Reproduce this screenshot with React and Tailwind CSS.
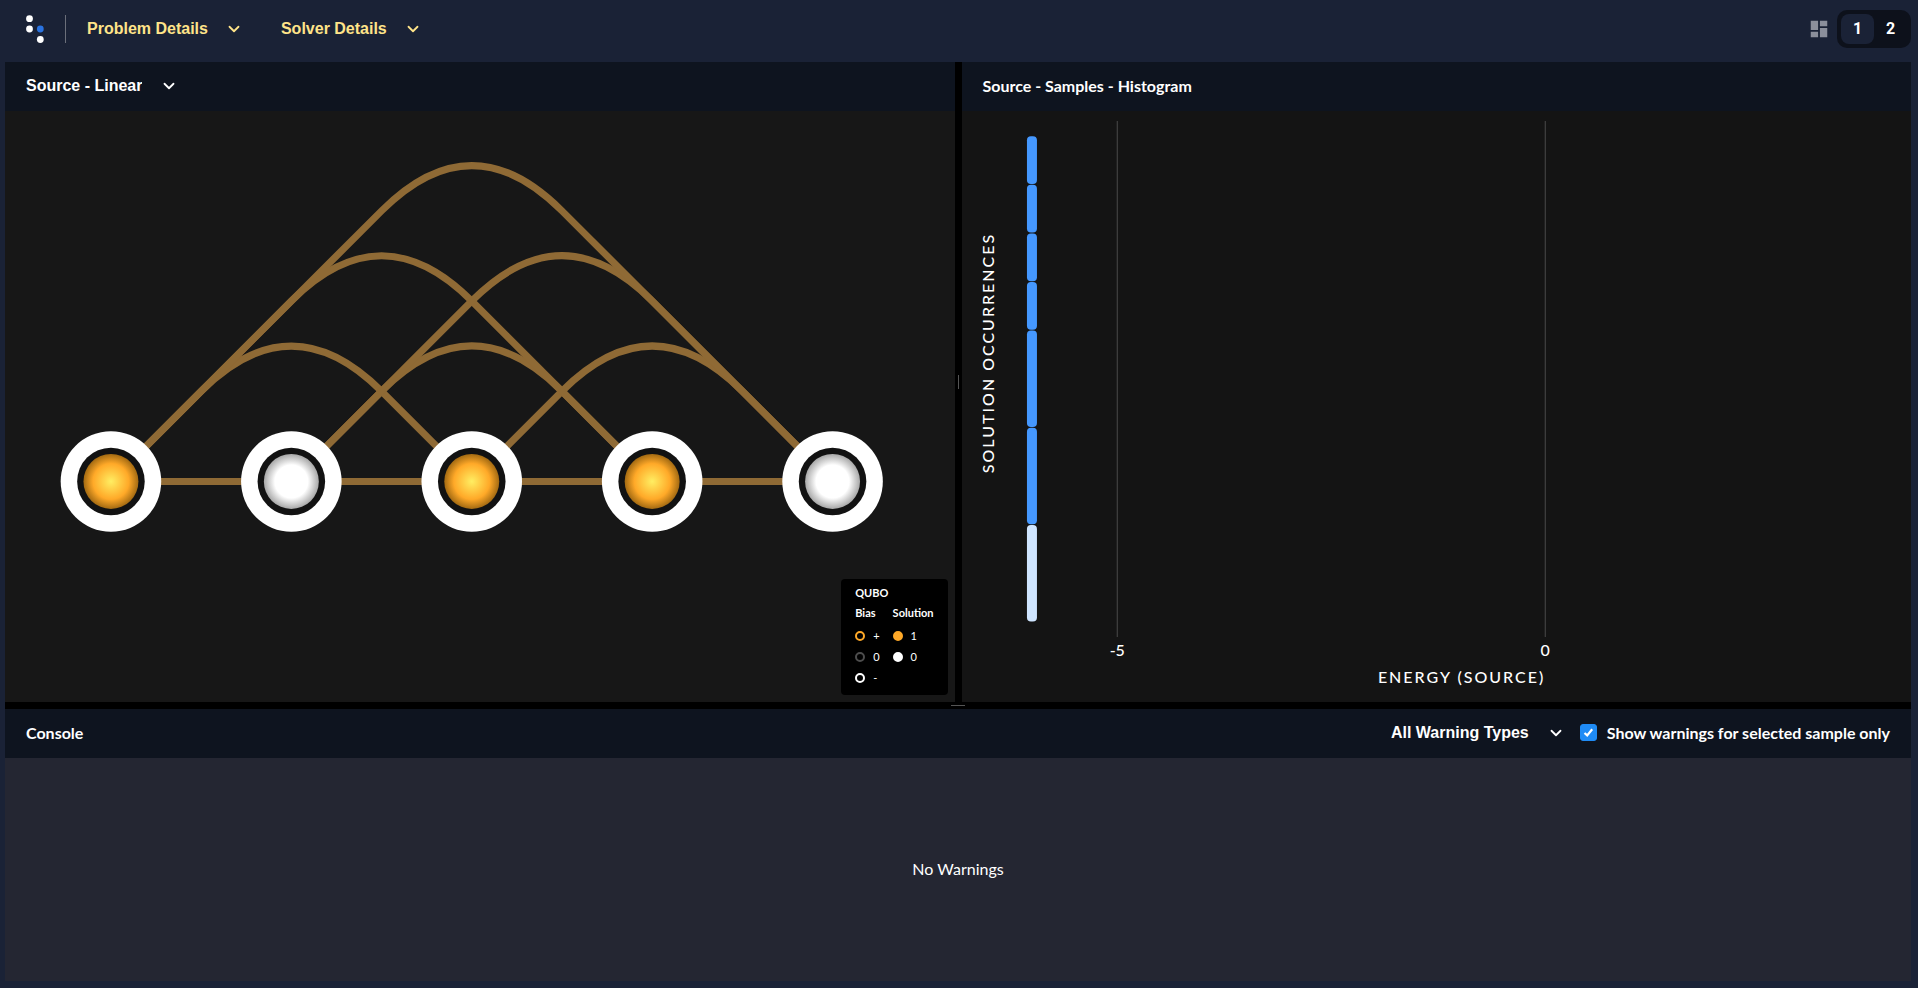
import { ChevronDown } from "lucide-react";
import { MdDashboard } from "react-icons/md";

const NODE_Y = 370.5;
const NODES = [
  { x: 106, fill: "url(#gold)" },
  { x: 286.5, fill: "url(#silver)" },
  { x: 467, fill: "url(#gold)" },
  { x: 647.5, fill: "url(#gold)" },
  { x: 828, fill: "url(#silver)" },
];

const EDGES = [
  [0, 1], [1, 2], [2, 3], [3, 4],
  [0, 2], [1, 3], [2, 4],
  [0, 3], [1, 4],
  [0, 4],
];

// Neighbours are joined by a straight line; the others rise at 45 degrees and round off near the apex.
function edgePath([from, to]) {
  const a = NODES[from].x;
  const b = NODES[to].x;
  if (to - from === 1) return `M${a} ${NODE_Y}H${b}`;
  const mid = (a + b) / 2;
  const apex = NODE_Y - (b - a) / 2;
  return `M${a} ${NODE_Y}L${mid - 90} ${apex + 90}Q${mid} ${apex} ${mid + 90} ${apex + 90}L${b} ${NODE_Y}`;
}

const BARS = [
  { units: 1 }, { units: 1 }, { units: 1 }, { units: 1 },
  { units: 2 }, { units: 2 }, { units: 2, selected: true },
];
const UNIT = 48.6;

function Logo() {
  return (
    <svg width="20" height="30" viewBox="0 0 20 30" aria-label="Home" role="img">
      <circle cx="4.5" cy="4.7" r="3.4" fill="#fff" />
      <circle cx="4.5" cy="15" r="3.4" fill="#fff" />
      <circle cx="15.3" cy="15" r="3.4" fill="#2a73e0" />
      <circle cx="15.3" cy="25.5" r="3.4" fill="#fff" />
    </svg>
  );
}

function MenuButton({ children }) {
  return (
    <button type="button" className="flex items-center gap-[17px] font-bold text-[#ffe489]">
      {children}
      <ChevronDown size={18} strokeWidth={2.4} />
    </button>
  );
}

function SelectBox({ label, value }) {
  return (
    <div className="grid items-center">
      <select
        aria-label={label}
        defaultValue={value}
        className="col-start-1 row-start-1 appearance-none bg-transparent pr-9 font-bold text-white [field-sizing:content]"
      >
        <option>{value}</option>
      </select>
      <ChevronDown
        size={18}
        strokeWidth={2.4}
        className="pointer-events-none col-start-1 row-start-1 justify-self-end text-white"
      />
    </div>
  );
}

function PanelHeader({ children }) {
  return <div className="flex h-[49px] shrink-0 items-center bg-[#0e141f] px-[21px] pb-[2px]">{children}</div>;
}

function Graph() {
  return (
    <svg viewBox="0 0 950 591" className="h-full w-full" role="img" aria-label="Linear graph">
      <defs>
        <radialGradient id="gold">
          <stop offset="0" stopColor="#ffee62" />
          <stop offset="0.65" stopColor="#ffa928" />
          <stop offset="1" stopColor="#a36a12" />
        </radialGradient>
        <radialGradient id="silver">
          <stop offset="0.6" stopColor="#fff" />
          <stop offset="1" stopColor="#a8a8a8" />
        </radialGradient>
      </defs>
      <g fill="none" stroke="#8f6a35" strokeWidth="7">
        {EDGES.map((e) => <path key={e.join("-")} d={edgePath(e)} />)}
      </g>
      {NODES.map((n) => (
        <g key={n.x}>
          <circle cx={n.x} cy={NODE_Y} r="50.3" fill="#fff" />
          <circle cx={n.x} cy={NODE_Y} r="33.8" fill="#121212" />
          <circle cx={n.x} cy={NODE_Y} r="27.5" fill={n.fill} />
        </g>
      ))}
    </svg>
  );
}

function LegendColumn({ title, items }) {
  return (
    <div>
      <h4 className="leading-[18px] font-bold">{title}</h4>
      <ul className="mt-[3px] leading-[21px]">
        {items.map(([swatch, text]) => (
          <li key={text} className="flex items-center gap-2">
            <span className={`size-[10px] rounded-full border-2 ${swatch}`} />
            {text}
          </li>
        ))}
      </ul>
    </div>
  );
}

function Legend() {
  return (
    <div className="absolute right-[7px] bottom-[7px] rounded bg-black px-[14px] py-[7px] text-[11px] text-white">
      <h3 className="leading-[14px] font-bold">QUBO</h3>
      <div className="mt-1 flex gap-[13px]">
        <LegendColumn
          title="Bias"
          items={[["border-[#ffa928]", "+"], ["border-[#4d4d4d]", "0"], ["border-white", "-"]]}
        />
        <LegendColumn
          title="Solution"
          items={[["border-[#ffa928] bg-[#ffa928]", "1"], ["border-white bg-white", "0"]]}
        />
      </div>
    </div>
  );
}

function Histogram() {
  let y = 25.2;
  return (
    <svg viewBox="0 0 949 591" className="h-full w-full" role="img" aria-label="Samples histogram">
      <path d="M155 10V526M583 10V526" stroke="#4a4a4a" />
      {BARS.map((bar, i) => {
        const top = y;
        y += bar.units * UNIT;
        return (
          <rect
            key={i}
            x="64.7"
            y={top}
            width="10"
            height={bar.units * UNIT - 0.8}
            rx="4"
            fill={bar.selected ? "#cfe5ff" : "#4598ff"}
          />
        );
      })}
      <g fill="#fff" className="text-base font-medium">
        <text x="155" y="545" textAnchor="middle">-5</text>
        <text x="583" y="545" textAnchor="middle">0</text>
        <text x="583" y="572" textAnchor="end" className="tracking-[2px]">ENERGY (SOURCE)</text>
        <text transform="translate(32 242) rotate(-90)" textAnchor="middle" className="tracking-[2px]">
          SOLUTION OCCURRENCES
        </text>
      </g>
    </svg>
  );
}

export default function App() {
  return (
    <div className="flex h-screen flex-col bg-[#1a2236] pr-[7px] pb-[7px] pl-[5px] font-[Liberation_Sans,sans-serif] text-base text-white">
      <header className="flex h-[62px] shrink-0 items-center justify-between pb-1 pl-5">
        <div className="flex items-center">
          <Logo />
          <span className="ml-5 h-7 w-px bg-[#6b6f7a]" />
          <nav className="ml-[21px] flex gap-[38px]">
            <MenuButton>Problem Details</MenuButton>
            <MenuButton>Solver Details</MenuButton>
          </nav>
        </div>
        <div className="flex items-center gap-[7px]">
          <button type="button" aria-label="Layout">
            <MdDashboard size={22} className="text-[#8b8f9b]" />
          </button>
          <div className="flex rounded-[10px] bg-[#0d111b] p-1 font-[Roboto,sans-serif] font-bold">
            <button type="button" className="h-[30px] w-[33px] rounded-lg bg-[#1a2236]">1</button>
            <button type="button" className="h-[30px] w-[33px] rounded-lg">2</button>
          </div>
        </div>
      </header>

      <main className="flex min-h-0 flex-1 flex-col bg-black font-[Lato,sans-serif]">
        <div className="flex min-h-0 flex-[640]">
          <section className="relative flex min-w-0 flex-1 flex-col bg-[#171717]">
            <PanelHeader>
              <div className="font-[Liberation_Sans,sans-serif]">
                <SelectBox label="Graph view" value="Source - Linear" />
              </div>
            </PanelHeader>
            <div className="min-h-0 flex-1"><Graph /></div>
            <Legend />
          </section>
          <div className="flex w-[7px] shrink-0 items-center justify-center bg-black">
            <span className="h-[14px] w-px bg-[#555]" />
          </div>
          <section className="flex min-w-0 flex-1 flex-col bg-[#141414]">
            <PanelHeader><h2 className="font-bold">Source - Samples - Histogram</h2></PanelHeader>
            <div className="min-h-0 flex-1"><Histogram /></div>
          </section>
        </div>
        <div className="flex h-[7px] shrink-0 items-center justify-center bg-black">
          <span className="h-px w-[14px] bg-[#555]" />
        </div>
        <section className="flex min-h-0 flex-[272] flex-col bg-[#242632]">
          <PanelHeader>
            <h2 className="mr-auto font-bold">Console</h2>
            <div className="font-[Liberation_Sans,sans-serif]">
              <SelectBox label="Warning types" value="All Warning Types" />
            </div>
            <label className="ml-[15px] flex items-center gap-[10px] font-bold">
              <span className="grid size-[17px] place-items-center">
                <input
                  type="checkbox"
                  defaultChecked
                  className="peer col-start-1 row-start-1 size-[17px] appearance-none rounded-[3px] border border-[#1f8bf5] checked:bg-[#1f8bf5]"
                />
                <svg
                  viewBox="0 0 17 17"
                  className="pointer-events-none invisible col-start-1 row-start-1 size-[17px] peer-checked:visible"
                >
                  <path d="M4.5 9l2.7 2.4 5-6.2" fill="none" stroke="#fff" strokeWidth="2.2" />
                </svg>
              </span>
              Show warnings for selected sample only
            </label>
          </PanelHeader>
          <div className="flex flex-1 items-center justify-center pb-[2px]">
            <p>No Warnings</p>
          </div>
        </section>
      </main>
    </div>
  );
}
